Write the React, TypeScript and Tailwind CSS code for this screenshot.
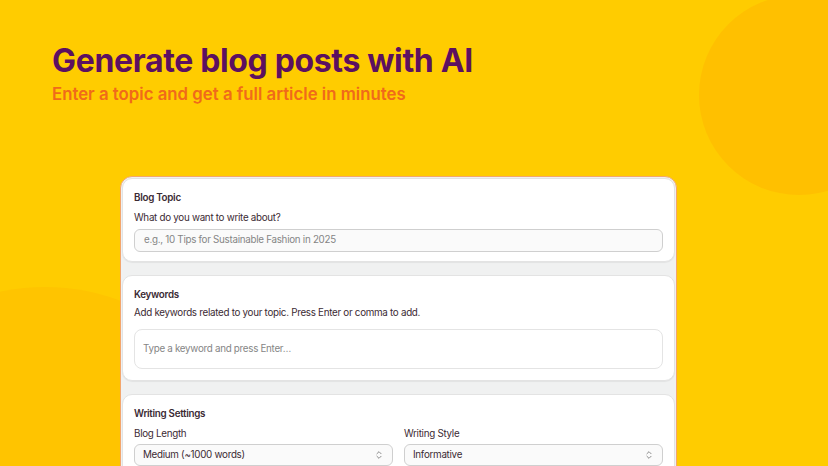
import { ChevronsUpDown } from 'lucide-react';

const font = { fontFamily: 'Inter, "Noto Sans", sans-serif' };

function Section({ title, children, className = '' }: { title: string; children: React.ReactNode; className?: string }) {
  return (
    <div className={`rounded-[10px] border border-[#e3e3e3] bg-white px-[11px] shadow-[0_1px_1px_rgba(0,0,0,0.06)] ${className}`}>
      <div className="text-[9.8px] font-semibold leading-[16px] tracking-[-0.28px] text-[#3b2a33]">{title}</div>
      {children}
    </div>
  );
}

function Select({ value }: { value: string }) {
  return (
    <div className="mt-[2px] flex h-[22px] items-center justify-between rounded-[6px] border border-[#cfcfcf] bg-[#fafafa] pl-[8px] pr-[8px] text-[9.8px] tracking-[-0.28px] text-[#3b2a33]">
      <span>{value}</span>
      <ChevronsUpDown className="h-[10px] w-[10px] text-[#777]" strokeWidth={2} />
    </div>
  );
}

export default function App() {
  return (
    <div className="relative h-[466px] w-full overflow-hidden bg-[#ffcc00]" style={font}>
      <div className="absolute left-[699px] top-[-5px] h-[200px] w-[200px] rounded-full bg-[#ffc000]" />
      <div className="absolute left-[-168px] top-[287px] h-[426px] w-[426px] rounded-full bg-[#ffc400]" />

      <div className="relative pl-[52px] pt-[41px]">
        <h1 className="text-[32px] font-bold leading-[40px] tracking-[-0.35px] text-[#5c1060]">
          Generate blog posts with AI
        </h1>
        <p className="mt-[2px] text-[16.8px] font-semibold leading-[22px] text-[#f06a1a]">
          Enter a topic and get a full article in minutes
        </p>
      </div>

      <div className="relative ml-[120px] mt-[71px] w-[557px] rounded-[12px] border border-[#f3a66d] bg-[#f0f1f1] p-px">
        <div className="flex flex-col gap-[13px]">
          <Section title="Blog Topic" className="pb-[9px] pt-[11px]">
            <div className="mt-[4px] text-[9.8px] leading-[16px] tracking-[-0.28px] text-[#3b2a33]">
              What do you want to write about?
            </div>
            <div className="mt-[3px] flex h-[23px] items-center rounded-[6px] border border-[#cfcfcf] bg-[#fafafa] px-[9px] text-[9.8px] tracking-[-0.28px] text-[#858585]">
              e.g., 10 Tips for Sustainable Fashion in 2025
            </div>
          </Section>

          <Section title="Keywords" className="pb-[11px] pt-[11px]">
            <div className="mt-[2px] text-[9.8px] leading-[16px] tracking-[-0.28px] text-[#3b2a33]">
              Add keywords related to your topic. Press Enter or comma to add.
            </div>
            <div className="mt-[8px] flex h-[40px] items-center rounded-[8px] border border-[#e4e4e4] bg-white px-[8px] text-[9.8px] tracking-[-0.28px] text-[#858585]">
              Type a keyword and press Enter…
            </div>
          </Section>

          <Section title="Writing Settings" className="pb-[12px] pt-[11px]">
            <div className="mt-[4px] grid grid-cols-2 gap-[11px]">
              <div>
                <div className="text-[9.8px] leading-[16px] tracking-[-0.28px] text-[#3b2a33]">Blog Length</div>
                <Select value="Medium (~1000 words)" />
              </div>
              <div>
                <div className="text-[9.8px] leading-[16px] tracking-[-0.28px] text-[#3b2a33]">Writing Style</div>
                <Select value="Informative" />
              </div>
            </div>
          </Section>
        </div>
      </div>
    </div>
  );
}
